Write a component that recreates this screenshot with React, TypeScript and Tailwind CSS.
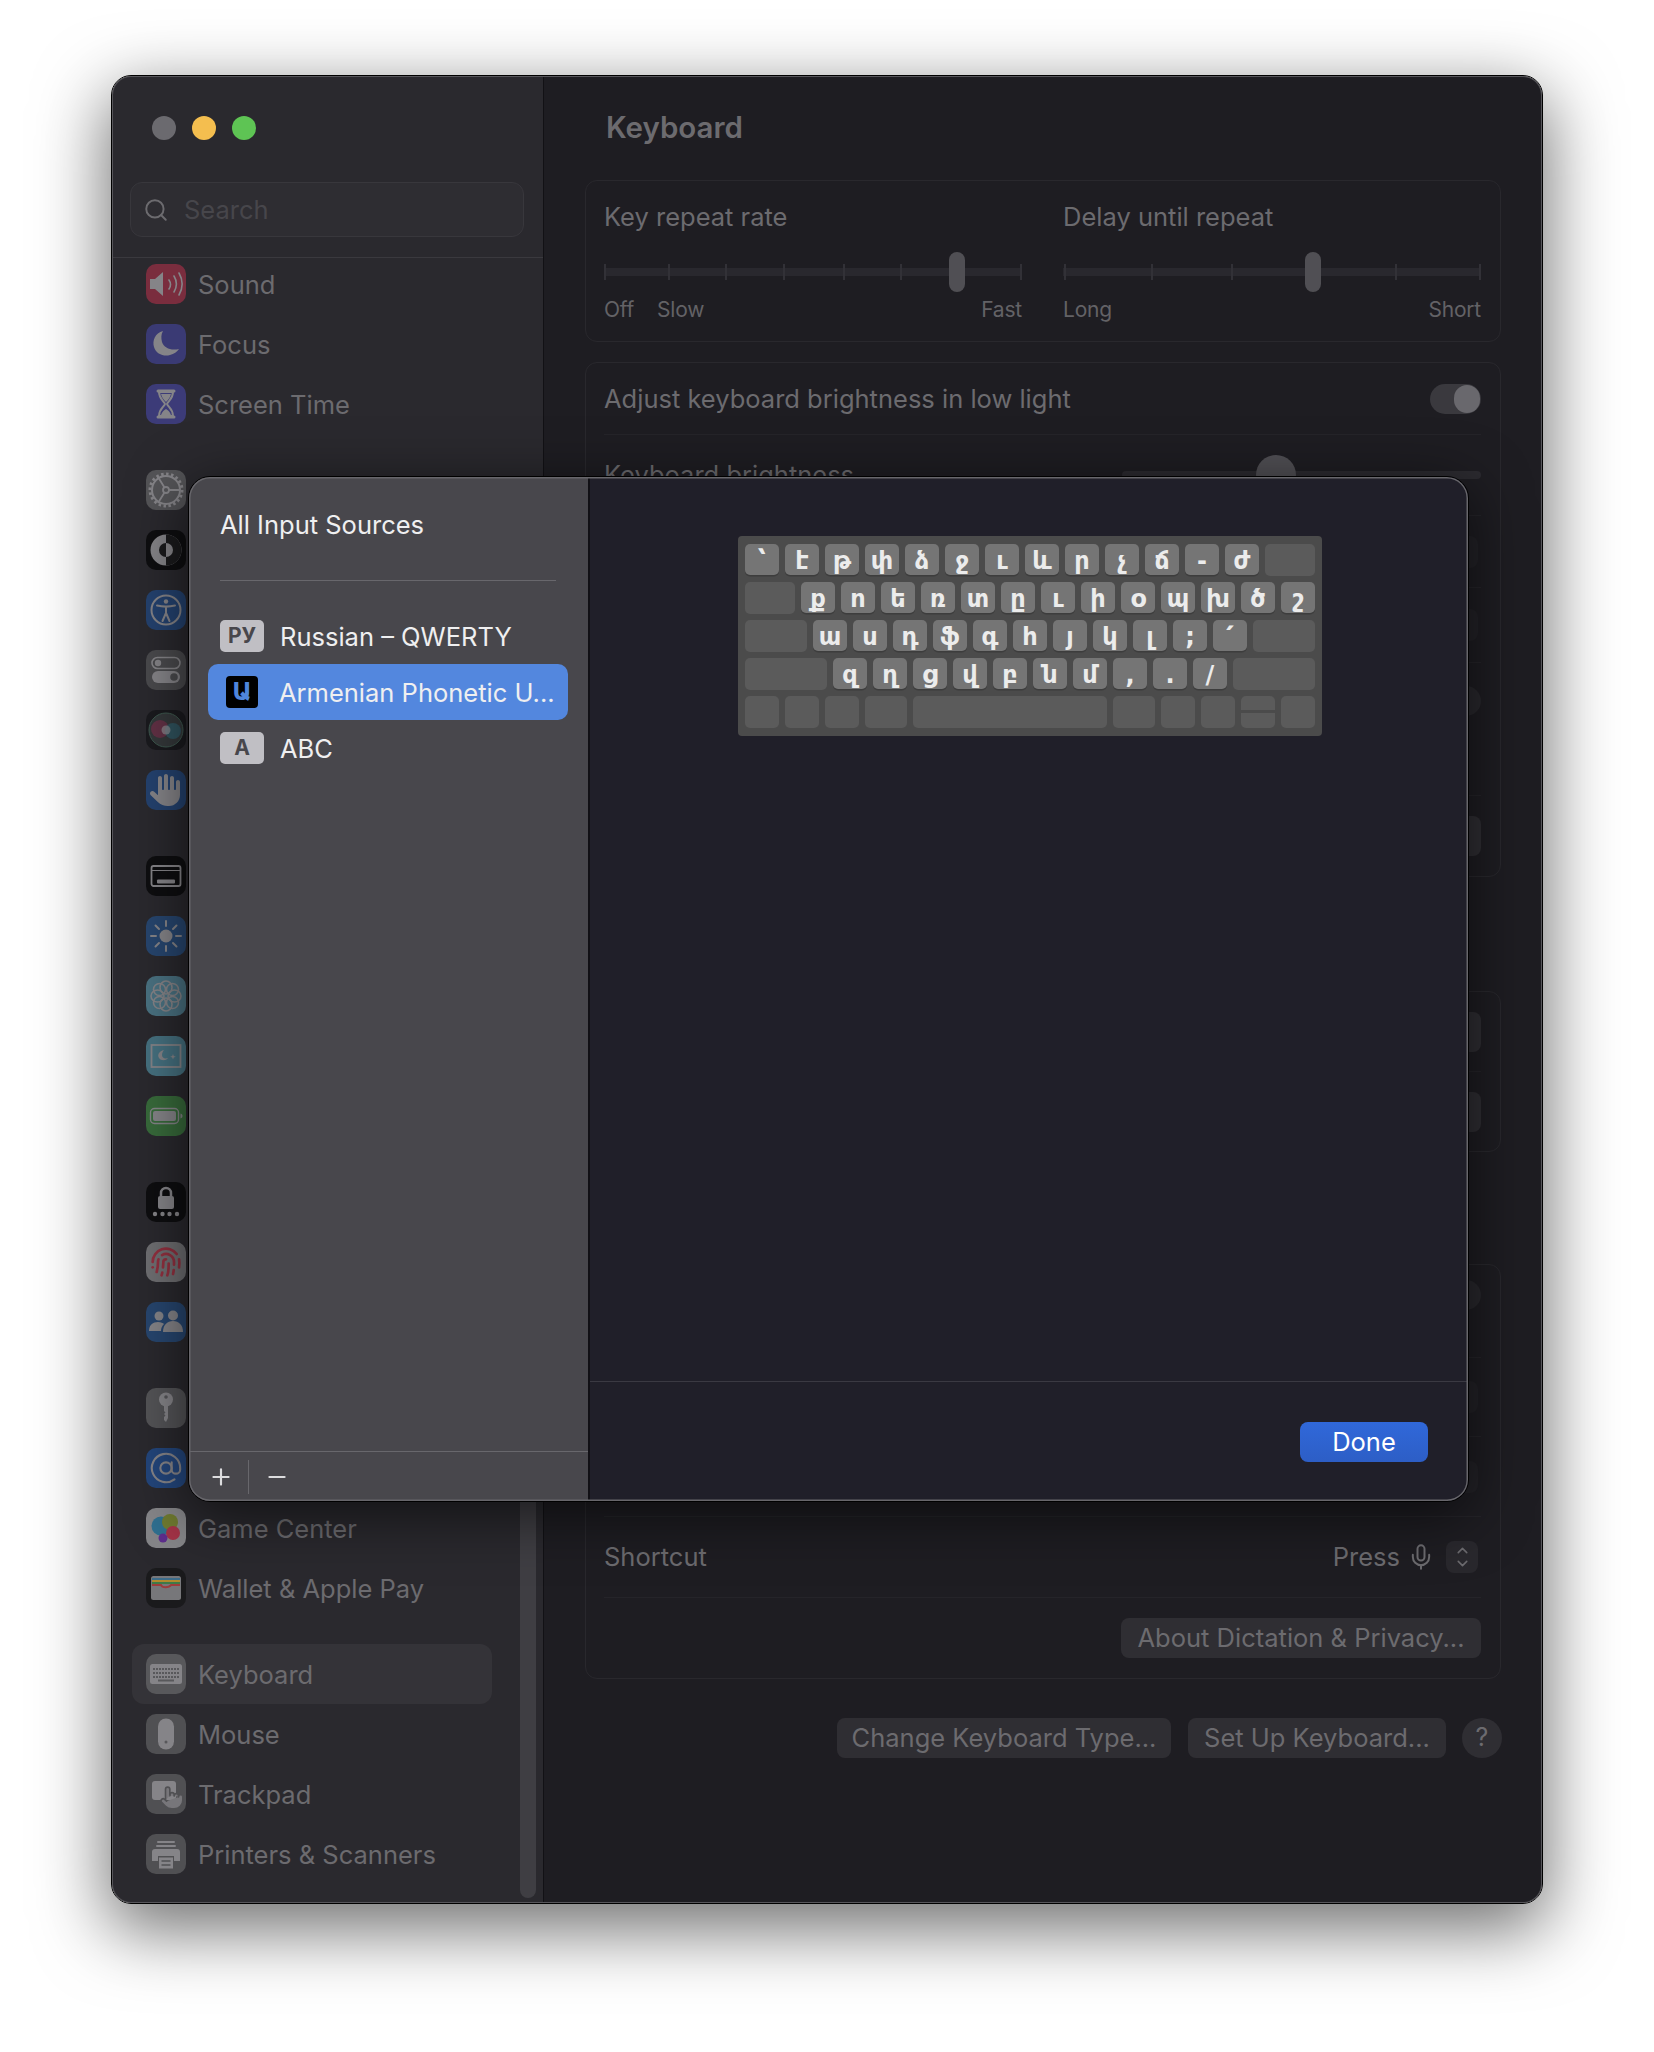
import type { ReactNode } from 'react'
import { AtSign, ChevronDown, ChevronUp, Fingerprint, Mic, Minus, Plus, Pointer, Search } from 'lucide-react'
import { FaHand } from 'react-icons/fa6'

const UI = "font-['Inter',sans-serif]"
const ICON = '#858488'

function Svg({ children }: { children: ReactNode }) {
  return (
    <svg viewBox="0 0 40 40" className="h-10 w-10" fill="none">
      {children}
    </svg>
  )
}

const icons: Record<string, { bg: string; art: ReactNode }> = {
  Sound: {
    bg: 'bg-[#7a2d3e]',
    art: (
      <Svg>
        <path d="M4 15h5l8-7v24l-8-7H4z" fill={ICON} />
        <path d="M23 16c2 3 2 6 0 9M28 12c3 5 3 11 0 16M33 9c4 7 4 15 0 22" stroke={ICON} strokeWidth="1.6" strokeLinecap="round" />
      </Svg>
    ),
  },
  Focus: {
    bg: 'bg-[#3a3a74]',
    art: (
      <Svg>
        <path d="M17 7C9 9 6 17 8 23c2 7 10 10 16 8 4-1 7-3 9-6-8 2-15-1-17-7-1-4-1-8 1-11z" fill={ICON} />
      </Svg>
    ),
  },
  'Screen Time': {
    bg: 'bg-[#3c3b78]',
    art: (
      <Svg>
        <path d="M12 7h16M12 33h16" stroke={ICON} strokeWidth="3" strokeLinecap="round" />
        <path d="M13 8c0 7 5 9 6 12-1 3-6 5-6 12h14c0-7-5-9-6-12 1-3 6-5 6-12z" stroke={ICON} strokeWidth="2" />
        <path d="M15 10h10c-1 4-3 6-5 8-2-2-4-4-5-8zM15 31c1-3 3-5 5-6 2 1 4 3 5 6z" fill={ICON} />
      </Svg>
    ),
  },
  General: {
    bg: 'bg-[#545457]',
    art: (
      <Svg>
        <circle cx="20" cy="20" r="14" stroke={ICON} strokeWidth="2" />
        <circle cx="20" cy="20" r="16" stroke={ICON} strokeWidth="3" strokeDasharray="2.5 2.5" />
        <circle cx="20" cy="20" r="3" stroke={ICON} strokeWidth="1.8" />
        <path d="M23 20h11M18.500 17.500 12 7M18.500 22.500 12 33" stroke={ICON} strokeWidth="1.8" />
      </Svg>
    ),
  },
  Appearance: {
    bg: 'bg-[#0e0e10]',
    art: (
      <Svg>
        <circle cx="20" cy="20" r="15.500" fill={ICON} />
        <path d="M20 4.500a15.500 15.500 0 0 1 0 31z" fill="#1a1a1c" />
        <circle cx="20" cy="20" r="7" fill="#1a1a1c" />
        <path d="M20 13a7 7 0 0 1 0 14z" fill={ICON} />
      </Svg>
    ),
  },
  Accessibility: {
    bg: 'bg-[#24426f]',
    art: (
      <Svg>
        <circle cx="20" cy="20" r="14.500" stroke={ICON} strokeWidth="2" />
        <circle cx="20" cy="11.500" r="2.200" fill={ICON} />
        <path d="M11 15.500c6 1.500 12 1.500 18 0M20 17v6M20 23l-3.500 8M20 23l3.500 8" stroke={ICON} strokeWidth="2" strokeLinecap="round" />
      </Svg>
    ),
  },
  'Control Center': {
    bg: 'bg-[#4a4a4d]',
    art: (
      <Svg>
        <rect x="6" y="7.500" width="28" height="11" rx="5.500" stroke={ICON} strokeWidth="1.600" />
        <circle cx="12" cy="13" r="3.200" fill={ICON} />
        <rect x="6" y="21" width="28" height="12" rx="6" fill={ICON} />
        <circle cx="28" cy="27" r="3.800" fill="#4a4a4d" />
      </Svg>
    ),
  },
  'Siri & Spotlight': {
    bg: 'bg-[#1a1a1e]',
    art: (
      <Svg>
        <circle cx="20" cy="20" r="17" fill="#34383a" stroke="#3f5a50" strokeWidth="1" />
        <circle cx="14" cy="19" r="9" fill="#6e3048" opacity="0.8" />
        <circle cx="27" cy="21" r="8" fill="#2f5a68" opacity="0.8" />
        <circle cx="20" cy="20" r="4.500" fill="#8d8d92" opacity="0.7" />
      </Svg>
    ),
  },
  'Privacy & Security': {
    bg: 'bg-[#24426f]',
    art: <FaHand className="h-[32px] w-[32px] text-[#858488]" />,
  },
  'Desktop & Dock': {
    bg: 'bg-[#0e0e10]',
    art: (
      <Svg>
        <rect x="5.500" y="10" width="29" height="20" rx="2" stroke={ICON} strokeWidth="1.800" />
        <path d="M6 14.500h28" stroke={ICON} strokeWidth="1.200" />
        <rect x="11" y="23.500" width="18" height="4" rx="1" fill={ICON} />
      </Svg>
    ),
  },
  Displays: {
    bg: 'bg-[#27466f]',
    art: (
      <Svg>
        <circle cx="20" cy="20" r="6.500" fill={ICON} />
        <path d="M20 5v5M20 30v5M5 20h5M30 20h5M9.500 9.500l3.500 3.500M27 27l3.500 3.500M30.500 9.500 27 13M13 27l-3.500 3.500" stroke={ICON} strokeWidth="2" strokeLinecap="round" />
      </Svg>
    ),
  },
  Wallpaper: {
    bg: 'bg-[#4a7282]',
    art: (
      <Svg>
        <ellipse cx="20" cy="11.500" rx="6" ry="6.500" stroke={ICON} strokeWidth="1.600" />
        <ellipse cx="20" cy="28.500" rx="6" ry="6.500" stroke={ICON} strokeWidth="1.600" />
        <ellipse cx="11.500" cy="20" rx="6.500" ry="6" stroke={ICON} strokeWidth="1.600" />
        <ellipse cx="28.500" cy="20" rx="6.500" ry="6" stroke={ICON} strokeWidth="1.600" />
        <circle cx="13.500" cy="13.500" r="6" stroke={ICON} strokeWidth="1.600" />
        <circle cx="26.500" cy="13.500" r="6" stroke={ICON} strokeWidth="1.600" />
        <circle cx="13.500" cy="26.500" r="6" stroke={ICON} strokeWidth="1.600" />
        <circle cx="26.500" cy="26.500" r="6" stroke={ICON} strokeWidth="1.600" />
      </Svg>
    ),
  },
  'Screen Saver': {
    bg: 'bg-[#467180]',
    art: (
      <Svg>
        <rect x="5.500" y="9" width="29" height="22" stroke={ICON} strokeWidth="1.800" />
        <path d="M18 14c-5 1-7 5-5 8 2 3 7 3 9 0-3 1-6 0-6-3 0-2 1-4 2-5z" fill={ICON} />
        <path d="M27 18l.8 2 2 .8-2 .8-.8 2-.8-2-2-.8 2-.8z" fill={ICON} />
      </Svg>
    ),
  },
  Battery: {
    bg: 'bg-[#386b3b]',
    art: (
      <Svg>
        <rect x="4.500" y="12.500" width="28" height="15" rx="4" stroke={ICON} strokeWidth="1.400" />
        <rect x="7" y="15" width="23" height="10" rx="2" fill={ICON} />
        <path d="M34.500 17.500v5c1.500-.5 2-1.500 2-2.500s-.5-2-2-2.500z" fill={ICON} />
      </Svg>
    ),
  },
  'Lock Screen': {
    bg: 'bg-[#0e0e10]',
    art: (
      <Svg>
        <rect x="12" y="14" width="16" height="13" rx="2" fill={ICON} />
        <path d="M15 14v-3a5 5 0 0 1 10 0v3" stroke={ICON} strokeWidth="2.500" />
        <circle cx="9" cy="32" r="2.200" fill={ICON} />
        <circle cx="16.500" cy="32" r="2.200" fill={ICON} />
        <circle cx="23.500" cy="32" r="2.200" fill={ICON} />
        <circle cx="31" cy="32" r="2.200" fill={ICON} />
      </Svg>
    ),
  },
  'Touch ID & Password': {
    bg: 'bg-[#6f6f72]',
    art: <Fingerprint className="h-8 w-8 text-[#92303f]" strokeWidth={2} />,
  },
  'Users & Groups': {
    bg: 'bg-[#27466f]',
    art: (
      <Svg>
        <circle cx="13" cy="14" r="4.500" fill={ICON} />
        <circle cx="27" cy="13.500" r="5" fill={ICON} />
        <path d="M3 29c0-6 4-9 9-9 3 0 5 1 6 2-2 2-3 4-3 7z" fill={ICON} />
        <path d="M17 30c0-7 4-11 10-11s10 4 10 11z" fill={ICON} />
      </Svg>
    ),
  },
  Passwords: {
    bg: 'bg-[#545457]',
    art: (
      <Svg>
        <circle cx="20" cy="11.500" r="7" fill={ICON} />
        <circle cx="20" cy="9" r="1.800" fill="#545457" />
        <path d="M18 16h4v14l-2 4-2-2v-3l1.500-1.500L18 26l1.500-1.500L18 23z" fill={ICON} />
      </Svg>
    ),
  },
  'Internet Accounts': {
    bg: 'bg-[#23467c]',
    art: <AtSign className="h-[34px] w-[34px] text-[#858488]" strokeWidth={1.500} />,
  },
  'Game Center': {
    bg: 'bg-[#858588]',
    art: (
      <Svg>
        <circle cx="15" cy="18" r="9.500" fill="#2f6f8f" />
        <circle cx="24" cy="14" r="8" fill="#6f7a30" />
        <circle cx="27" cy="25" r="7" fill="#a33347" />
        <circle cx="17" cy="30" r="4.500" fill="#5d2d8c" />
      </Svg>
    ),
  },
  'Wallet & Apple Pay': {
    bg: 'bg-[#1a1a1c]',
    art: (
      <Svg>
        <rect x="5" y="8" width="30" height="24" rx="2.500" fill="#77777a" />
        <path d="M6 11h28" stroke="#3c6c8a" strokeWidth="2" />
        <path d="M6 13h28" stroke="#b08a2e" strokeWidth="2" />
        <path d="M6 15h28" stroke="#3e7a48" strokeWidth="2" />
        <path d="M6 17h9c1 3 8 3 10 0h9" stroke="#9d3c3c" strokeWidth="2" />
      </Svg>
    ),
  },
  Keyboard: {
    bg: 'bg-[#58585b]',
    art: (
      <Svg>
        <rect x="4" y="10" width="32" height="20" rx="2.500" fill={ICON} />
        <path d="M7 15h26M7 19h26" stroke="#58585b" strokeWidth="2" strokeDasharray="2 1" />
        <path d="M7 23h26" stroke="#58585b" strokeWidth="2" strokeDasharray="2 1" />
        <path d="M12 26.500h16" stroke="#58585b" strokeWidth="1.800" />
      </Svg>
    ),
  },
  Mouse: {
    bg: 'bg-[#505053]',
    art: (
      <Svg>
        <rect x="12" y="4.500" width="16" height="31" rx="8" fill={ICON} />
        <circle cx="20" cy="28" r="1.500" fill="#58585b" />
      </Svg>
    ),
  },
  Trackpad: {
    bg: 'bg-[#505053]',
    art: (
      <div className="relative h-10 w-10">
        <div className="absolute left-[6px] top-[7px] h-[19px] w-[24px] rounded-[3px] bg-[#858488]" />
        <Pointer className="absolute left-[13px] top-[11px] h-[26px] w-[26px] fill-[#77767a] text-[#505053]" strokeWidth={1.500} />
      </div>
    ),
  },
  'Printers & Scanners': {
    bg: 'bg-[#505053]',
    art: (
      <Svg>
        <path d="M12 8h16M11 12h18" stroke={ICON} strokeWidth="2" strokeLinecap="round" />
        <path d="M9 15h22a3 3 0 0 1 3 3v9h-6v-5H12v5H6v-9a3 3 0 0 1 3-3z" fill={ICON} />
        <rect x="13" y="23.500" width="14" height="11" fill={ICON} />
        <path d="M15.500 27h9M15.500 31h9" stroke="#505053" strokeWidth="1.500" />
      </Svg>
    ),
  },
}

const groups = [
  ['Sound', 'Focus', 'Screen Time'],
  ['General', 'Appearance', 'Accessibility', 'Control Center', 'Siri & Spotlight', 'Privacy & Security'],
  ['Desktop & Dock', 'Displays', 'Wallpaper', 'Screen Saver', 'Battery'],
  ['Lock Screen', 'Touch ID & Password', 'Users & Groups'],
  ['Passwords', 'Internet Accounts', 'Game Center', 'Wallet & Apple Pay'],
  ['Keyboard', 'Mouse', 'Trackpad', 'Printers & Scanners'],
]

function SidebarRow({ label }: { label: string }) {
  const icon = icons[label]
  return (
    <div className={`mx-[20px] flex h-[60px] w-[360px] items-center gap-[12px] rounded-[12px] pl-[14px] ${label === 'Keyboard' ? 'bg-[#343338]' : ''}`}>
      <div className={`flex h-10 w-10 shrink-0 items-center justify-center overflow-hidden rounded-[10px] ${icon.bg}`}>{icon.art}</div>
      <span className="pt-[2px] text-[25.500px] text-[#6c6b6f]">{label}</span>
    </div>
  )
}

function Sidebar() {
  return (
    <aside className="relative h-full w-[431px] shrink-0 overflow-hidden bg-[#2a292e]">
      <div className="flex gap-4 pl-[40px] pt-[40px]">
        <span className="h-6 w-6 rounded-full bg-[#6b6a6f]" />
        <span className="h-6 w-6 rounded-full bg-[#f4be4f]" />
        <span className="h-6 w-6 rounded-full bg-[#5ec454]" />
      </div>
      <div className="mx-[18px] mt-[42px] flex h-[55px] w-[394px] items-center gap-[15px] rounded-[12px] border border-[#38373c] bg-[#2e2d32] pl-[12px]">
        <Search className="h-[26px] w-[26px] text-[#6c6b6f]" strokeWidth={1.800} />
        <span className="pt-[2px] text-[25.500px] text-[#47464b]">Search</span>
      </div>
      <div className="mt-[20px] h-px bg-[#3a393e]" />
      <div className="-mt-[4px] flex flex-col gap-[26px]">
        {groups.map((group) => (
          <div key={group[0]}>
            {group.map((label) => (
              <SidebarRow key={label} label={label} />
            ))}
          </div>
        ))}
      </div>
      <div className="absolute bottom-[5px] right-[7px] h-[800px] w-4 rounded-full bg-[#3f3e43]" />
    </aside>
  )
}

function Slider({ ticks, thumb }: { ticks: number[]; thumb: number }) {
  return (
    <div className="relative h-2 w-[418px] bg-[#29282e]">
      {ticks.map((t) => (
        <span key={t} className="absolute -top-1 h-4 w-[2px] bg-[#323137]" style={{ left: t }} />
      ))}
      <span className="absolute -top-4 h-10 w-4 rounded-full bg-[#504f54]" style={{ left: thumb - 8 }} />
    </div>
  )
}

function Card({ children, className = '' }: { children: ReactNode; className?: string }) {
  return <section className={`rounded-[12px] border border-[#29282d] pl-[18px] pr-[19px] ${className}`}>{children}</section>
}

function Row({ height, last, children }: { height: string; last?: boolean; children?: ReactNode }) {
  return <div className={`flex items-center justify-between ${height} ${last ? '' : 'border-b border-[#252429]'}`}>{children}</div>
}

function Stepper({ bright }: { bright?: boolean }) {
  return (
    <div className={`mr-[3px] flex h-[32px] w-[32px] shrink-0 flex-col items-center justify-center rounded-[8px] text-[#6c6b6f] ${bright ? 'bg-[#29282d]' : 'bg-[#232227]'}`}>
      <ChevronUp className="-mb-[4px] h-[17px] w-[17px]" strokeWidth={2.200} />
      <ChevronDown className="h-[17px] w-[17px]" strokeWidth={2.200} />
    </div>
  )
}

function Toggle() {
  return (
    <div className="ml-auto flex h-[30px] w-[51px] items-center justify-end rounded-full bg-[#3a393e] pr-px">
      <span className="h-[28px] w-[26px] rounded-full bg-[#69686d]" />
    </div>
  )
}

function PillButton({ children, className = '' }: { children: ReactNode; className?: string }) {
  return (
    <div className={`flex h-10 items-center justify-center rounded-[8px] bg-[#2f2e33] text-[25.500px] text-[#6c6b6f] ${className}`}>
      {children}
    </div>
  )
}

function MainPane() {
  return (
    <main className="relative h-full flex-1 border-l border-[#121115] bg-[#1e1d22] px-[41px] text-[#6c6b6f]">
      <div className="flex h-[104px] items-center pb-[2px] pl-[21px] text-[29.500px] font-semibold">Keyboard</div>

      <Card className="flex h-[162px] gap-[41px] pt-[16px]">
        <div className="w-[418px]">
          <div className="h-[40px] text-[25.500px] leading-[40px]">Key repeat rate</div>
          <div className="mt-[31px]">
            <Slider ticks={[0, 64, 121, 179, 239, 296, 416]} thumb={353} />
          </div>
          <div className="mt-[21px] flex h-[26px] items-center text-[21px] tracking-[-0.2px] text-[#636266]">
            <span className="w-[53px]">Off</span>
            <span>Slow</span>
            <span className="ml-auto">Fast</span>
          </div>
        </div>
        <div className="w-[418px]">
          <div className="h-[40px] text-[25.500px] leading-[40px]">Delay until repeat</div>
          <div className="mt-[31px]">
            <Slider ticks={[1, 88, 168, 332, 416]} thumb={250} />
          </div>
          <div className="mt-[21px] flex h-[26px] items-center justify-between text-[21px] tracking-[-0.2px] text-[#636266]">
            <span>Long</span>
            <span>Short</span>
          </div>
        </div>
      </Card>

      <Card className="mt-[20px] h-[515px]">
        <Row height="h-[72px]">
          <span className="pt-[2px] text-[25.500px]">Adjust keyboard brightness in low light</span>
          <Toggle />
        </Row>
        <Row height="h-[81px]">
          <span className="text-[25.500px]">Keyboard brightness</span>
          <div className="relative h-2 w-[359px] rounded-full bg-[#2c2b30]">
            <span className="absolute -top-4 left-[134px] h-10 w-10 rounded-full bg-[#504f54]" />
          </div>
        </Row>
        <Row height="h-[72px]"><span /><Stepper /></Row>
        <Row height="h-[75px]"><span /><Stepper /></Row>
        <div className="flex h-[133px] justify-end border-b border-[#252429] pt-[23px]">
          <div className="h-[30px] w-[51px] rounded-full bg-[#29282d]" />
        </div>
        <Row height="h-[80px]" last>
          <div className="ml-auto h-10 w-[120px] rounded-[8px] bg-[#2f2e33]" />
        </Row>
      </Card>

      <Card className="mt-[114px] h-[161px]">
        <Row height="h-[80px]"><div className="ml-auto h-10 w-[120px] rounded-[8px] bg-[#2f2e33]" /></Row>
        <Row height="h-[79px]" last><div className="ml-auto h-10 w-[120px] rounded-[8px] bg-[#2f2e33]" /></Row>
      </Card>

      <Card className="mt-[112px] h-[415px]">
        <div className="flex h-[93px] justify-end border-b border-[#252429] pt-[15px]">
          <div className="h-[30px] w-[51px] rounded-full bg-[#29282d]" />
        </div>
        <Row height="h-[79px]"><span /><Stepper /></Row>
        <Row height="h-[80px]"><span /><Stepper /></Row>
        <Row height="h-[81px]">
          <span className="text-[25.500px]">Shortcut</span>
          <div className="flex items-center">
            <span className="text-[25.500px]">Press</span>
            <Mic className="ml-[7px] mr-[11px] h-[28px] w-[28px]" strokeWidth={1.700} />
            <Stepper bright />
          </div>
        </Row>
        <div className="flex h-[80px] items-center justify-end">
          <PillButton className="w-[360px]">About Dictation &amp; Privacy...</PillButton>
        </div>
      </Card>

      <div className="-mr-px mt-[39px] flex items-center justify-end gap-[17px]">
        <PillButton className="w-[334px]">Change Keyboard Type...</PillButton>
        <PillButton className="w-[258px]">Set Up Keyboard...</PillButton>
        <div className="-ml-px flex h-10 w-10 items-center justify-center rounded-full bg-[#2f2e33] text-[25px] text-[#6c6b6f]">?</div>
      </div>
    </main>
  )
}

type KeySpec = { w?: number; label?: string }

const letterRow = (chars: string[]): KeySpec[] => chars.map((label) => ({ w: 34, label }))

const keyRows: KeySpec[][] = [
  [...letterRow(['՝', 'է', 'թ', 'փ', 'ձ', 'ջ', 'ւ', 'և', 'ր', 'չ', 'ճ', '-', 'ժ']), { w: 50 }],
  [{ w: 50 }, ...letterRow(['ք', 'ո', 'ե', 'ռ', 'տ', 'ը', 'ւ', 'ի', 'օ', 'պ', 'խ', 'ծ', 'շ'])],
  [{ w: 62 }, ...letterRow(['ա', 'ս', 'դ', 'ֆ', 'գ', 'հ', 'յ', 'կ', 'լ', ';', '՛']), { w: 62 }],
  [{ w: 82 }, ...letterRow(['զ', 'ղ', 'ց', 'վ', 'բ', 'ն', 'մ', ',', '.', '/']), { w: 82 }],
]

const bottomRow = [34, 34, 34, 42, 194, 42, 34, 34]

function KeyboardView() {
  return (
    <div className="flex h-[200px] w-[584px] flex-col gap-[6px] rounded-[4px] bg-[#4b4b4b] px-[7px] pt-[8px]">
      {keyRows.map((row, i) => (
        <div key={i} className="flex gap-[6px]">
          {row.map((key, j) =>
            key.label ? (
              <div
                key={j}
                className="flex h-[31px] items-center justify-center rounded-[5px] bg-[#757575] pt-[3px] font-['DejaVu_Sans',sans-serif] text-[24px] font-bold leading-none text-[#ececec] shadow-[0_1.500px_0_#3d3d3d]"
                style={{ width: key.w }}
              >
                {key.label}
              </div>
            ) : (
              <div key={j} className="h-[32px] rounded-[5px] bg-[#5b5b5b]" style={{ width: key.w }} />
            ),
          )}
        </div>
      ))}
      <div className="flex gap-[6px]">
        {bottomRow.map((w, j) => (
          <div key={j} className="h-[32px] rounded-[5px] bg-[#5b5b5b]" style={{ width: w }} />
        ))}
        <div className="flex h-[32px] w-[34px] flex-col justify-between">
          <div className="h-[14px] rounded-t-[5px] bg-[#5b5b5b]" />
          <div className="h-[15px] rounded-b-[5px] bg-[#5b5b5b]" />
        </div>
        <div className="h-[32px] w-[34px] rounded-[5px] bg-[#5b5b5b]" />
      </div>
    </div>
  )
}

function SourceRow({ badge, label, selected }: { badge: string; label: string; selected?: boolean }) {
  return (
    <div className={`ml-[19px] mr-[20px] flex h-[56px] items-center rounded-[10px] pl-[12px] ${selected ? 'bg-[#5387de]' : ''}`}>
      {selected ? (
        <div className="ml-[6px] mr-[21px] flex h-[32px] w-[32px] items-center justify-center rounded-[4px] bg-black font-['DejaVu_Sans',sans-serif] text-[24px] font-bold text-[#4f85dc]">
          {badge}
        </div>
      ) : (
        <div className="mr-[16px] flex h-[32px] w-[44px] items-center justify-center rounded-[5px] bg-[#c0bfc4] text-[21px] font-bold text-[#48474c]">
          {badge}
        </div>
      )}
      <span className="pt-[2px] text-[25.500px] text-[#efeff0]">{label}</span>
    </div>
  )
}

function InputSourcesSheet() {
  return (
    <div className="absolute left-[76px] top-[400px] z-10 flex h-[1026px] w-[1281px] overflow-hidden rounded-[22px] border border-black shadow-[0_12px_60px_rgba(0,0,0,0.6)]">
      <div className="flex w-[401px] shrink-0 flex-col border-r-2 border-[#111015] bg-[#48474c]">
        <div className="flex h-[103px] shrink-0 items-center pb-[6px] pl-[31px] text-[25.500px] text-[#efeff0]">
          All Input Sources
        </div>
        <div className="ml-[31px] h-px w-[336px] shrink-0 bg-[#68676c]" />
        <div className="mt-[27px] flex-1">
          <SourceRow badge="РУ" label="Russian – QWERTY" />
          <SourceRow badge="Ա" label="Armenian Phonetic U..." selected />
          <SourceRow badge="A" label="ABC" />
        </div>
        <div className="flex h-[50px] shrink-0 items-center border-t border-[#68676c] text-[#dcdcde]">
          <Plus className="ml-[19px] h-[26px] w-[26px]" strokeWidth={2} />
          <div className="ml-[14px] h-[34px] w-px bg-[#68676c]" />
          <Minus className="ml-[15px] h-[26px] w-[26px]" strokeWidth={2} />
        </div>
      </div>
      <div className="flex flex-1 flex-col bg-[#201f29]">
        <div className="flex flex-1 justify-center pl-[2px] pt-[59px]">
          <KeyboardView />
        </div>
        <div className="flex h-[120px] shrink-0 justify-end border-t border-[#3a3942] pr-[40px] pt-[40px]">
          <div className="flex h-10 w-[128px] items-center justify-center rounded-[8px] bg-gradient-to-b from-[#3068da] to-[#2d5ec6] text-[25.500px] text-white">
            Done
          </div>
        </div>
      </div>
      <div className="pointer-events-none absolute inset-0 rounded-[21px] shadow-[inset_0_0_0_1.500px_#67666b]" />
    </div>
  )
}

export default function App() {
  return (
    <div className={`h-[2052px] w-[1654px] overflow-hidden bg-white pl-[111px] pt-[75px] ${UI}`}>
      <div className="relative flex h-[1829px] w-[1432px] overflow-hidden rounded-[20px] border border-black shadow-[0_22px_70px_4px_rgba(0,0,0,0.56)]">
        <Sidebar />
        <MainPane />
        <div className="pointer-events-none absolute inset-0 rounded-[19px] shadow-[inset_0_0_0_1px_#57565b]" />
        <InputSourcesSheet />
      </div>
    </div>
  )
}
